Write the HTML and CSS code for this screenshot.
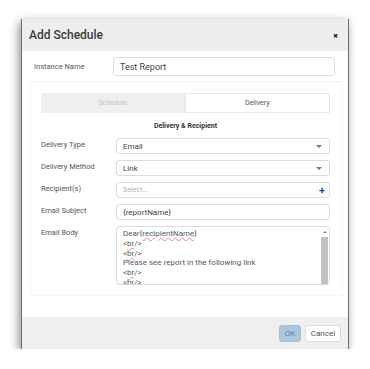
FILE: index.html
```html
<!DOCTYPE html>
<html lang="en">
<head>
  <meta charset="UTF-8" />
  <title>Add Schedule</title>
  <link rel="stylesheet" href="styles.css">
</head>
<body>
  <div class="dialog">
    <div class="dialogHeader">
      <span class="dialogTitle">Add Schedule</span>
      <span class="closeBtn">&#x2716;</span>
    </div>

    <div class="dialogContent">
      <div class="instanceRow">
        <label class="instanceLabel">Instance Name</label>
        <div class="field instanceInput">Test Report</div>
      </div>
      <div class="divider"></div>

      <div class="panel">
        <div class="tabs">
          <div class="tab">Schedule</div>
          <div class="tab active">Delivery</div>
        </div>

        <div class="sectionTitle">Delivery &amp; Recipient</div>

        <div class="formRow">
          <label>Delivery Type</label>
          <div class="field select">Email<span class="caret"></span></div>
        </div>
        <div class="formRow">
          <label>Delivery Method</label>
          <div class="field select">Link<span class="caret"></span></div>
        </div>
        <div class="formRow">
          <label>Recipient(s)</label>
          <div class="field select placeholder">Select...<span class="plus">+</span></div>
        </div>
        <div class="formRow">
          <label>Email Subject</label>
          <div class="field">{reportName}</div>
        </div>
        <div class="formRow">
          <label>Email Body</label>
          <div class="field bodyArea">
            <div class="bodyText">
              <div>Dear{<span class="spell">recipientName</span>}</div>
              <div>&lt;<span class="spell">br</span>/&gt;</div>
              <div>&lt;<span class="spell">br</span>/&gt;</div>
              <div>Please see report in the following link</div>
              <div>&lt;<span class="spell">br</span>/&gt;</div>
              <div>&lt;<span class="spell">br</span>/&gt;</div>
            </div>
            <div class="scrollbar">
              <span class="scrollArrow"></span>
              <span class="scrollThumb"></span>
            </div>
          </div>
        </div>
      </div>
    </div>

    <div class="dialogFooter">
      <button class="btn btnOk">OK</button>
      <button class="btn btnCancel">Cancel</button>
    </div>
  </div>
</body>
</html>
```

FILE: styles.css
```css
body {
  margin: 0;
  background: #fff;
  font-family: Roboto, "Liberation Sans", sans-serif;
  color: #444;
}
.dialog {
  margin: 19px 0 0 21px;
  width: 328px;
  height: 330px;
  box-sizing: border-box;
  display: flex;
  flex-direction: column;
  background: #fff;
  border-left: 1px solid #6e6e6e;
  border-right: 1px solid #6e6e6e;
  box-shadow: -2px 3px 9px rgba(0, 0, 0, 0.45);
}
.dialogHeader {
  height: 32px;
  flex-shrink: 0;
  background: #eeeeee;
  display: flex;
  align-items: center;
  justify-content: space-between;
  padding: 0 10px 0 7px;
}
.dialogTitle {
  font-size: 12px;
  font-weight: 500;
  color: #3a3a3a;
}
.closeBtn {
  font-size: 6px;
  color: #222;
}
.dialogContent {
  flex: 1;
  padding: 6px 7px 0 7px;
}
.instanceRow {
  display: flex;
  align-items: center;
}
.instanceLabel {
  width: 79px;
  padding-left: 5px;
  font-size: 7.5px;
  color: #555;
}
.field {
  box-sizing: border-box;
  border: 1px solid #dcdcdc;
  border-radius: 3px;
  background: #fff;
  height: 16px;
  padding: 0 6px;
  font-size: 8px;
  color: #444;
  display: flex;
  align-items: center;
}
.instanceInput {
  width: 222px;
  height: 19px;
  font-size: 9px;
  padding-left: 6px;
}
.divider {
  margin: 5px 0 0 1px;
  width: 312px;
  height: 1px;
  background: #f0f0f0;
}
.panel {
  margin: 3px 0 0 1px;
  width: 313px;
  height: 211px;
  box-sizing: border-box;
  border: 1px solid #f6f6f6;
  border-top: none;
  padding: 8px 12px 0 10px;
}
.tabs {
  display: flex;
  height: 20px;
}
.tab {
  flex: 1;
  display: flex;
  align-items: center;
  justify-content: center;
  font-size: 7px;
  color: #c4c4c4;
  background: #efefef;
}
.tab.active {
  background: #fff;
  color: #555;
  box-sizing: border-box;
  border: 1px solid #e6e6e6;
}
.sectionTitle {
  margin: 9px 0 8px;
  text-align: center;
  font-size: 7px;
  font-weight: bold;
  color: #333;
}
.formRow {
  display: flex;
  align-items: flex-start;
  margin-bottom: 6px;
}
.formRow label {
  width: 75px;
  line-height: 14px;
  font-size: 7.5px;
  color: #555;
}
.formRow .field {
  width: 214px;
}
.select {
  justify-content: space-between;
}
.caret {
  width: 0;
  height: 0;
  border-left: 3px solid transparent;
  border-right: 3px solid transparent;
  border-top: 3px solid #777;
  margin-right: 1px;
}
.placeholder {
  color: #b0b0b0;
  font-size: 7px;
}
.plus {
  color: #1d4f9a;
  font-size: 11px;
  font-weight: bold;
  margin-right: -2px;
}
.bodyArea {
  height: 59px;
  padding: 2px 0 0 6px;
  align-items: stretch;
  overflow: hidden;
}
.bodyText {
  flex: 1;
  font-size: 8px;
  line-height: 9.8px;
  color: #5a5a5a;
  overflow: hidden;
}
.spell {
  text-decoration: underline wavy #e88;
  text-decoration-thickness: 0.5px;
}
.scrollbar {
  width: 7px;
  margin-right: 1px;
  display: flex;
  flex-direction: column;
  align-items: center;
}
.scrollArrow {
  margin-top: 2px;
  width: 0;
  height: 0;
  border-left: 2px solid transparent;
  border-right: 2px solid transparent;
  border-bottom: 2px solid #888;
}
.scrollThumb {
  margin-top: 4px;
  width: 7px;
  flex: 1;
  background: #c1c1c1;
}
.dialogFooter {
  height: 32px;
  flex-shrink: 0;
  background: #efefef;
  display: flex;
  align-items: center;
  justify-content: flex-end;
  gap: 4px;
  padding-right: 7px;
}
.btn {
  height: 17px;
  padding: 0 5px;
  font-family: Roboto, "Liberation Sans", sans-serif;
  font-size: 8px;
  border-radius: 3px;
  cursor: pointer;
}
.btnOk {
  width: 22px;
  padding: 0;
  background: #aac6dc;
  border: 1px solid #a2bfd6;
  color: #5d7f9c;
}
.btnOk:hover {
  background: #9bbbd4;
}
.btnCancel {
  width: 36px;
  padding: 0;
  background: #fff;
  border: 1px solid #dcdcdc;
  color: #555;
}
```
